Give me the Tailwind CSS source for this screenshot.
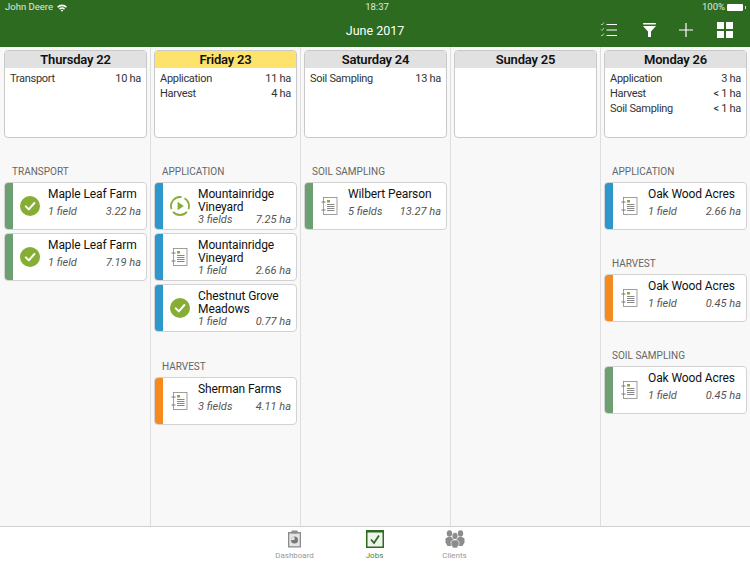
<!doctype html>
<html lang="en">
<head>
  <meta charset="utf-8">
  <title>Jobs</title>
  <script src="https://cdn.jsdelivr.net/npm/@tailwindcss/browser@4"></script>
</head>
<body class="w-[750px] h-[563px] overflow-hidden flex flex-col bg-white text-[#222] font-['Roboto','Liberation_Sans',sans-serif]">
  <svg class="hidden">
    <symbol id="done" viewBox="0 0 20 20">
      <circle cx="10" cy="10" r="10" fill="#86ae35"/>
      <path d="M5.800 10.400l3 3 5.600-6.400" fill="none" stroke="#fff" stroke-width="2" stroke-linecap="round" stroke-linejoin="round"/>
    </symbol>
    <symbol id="play" viewBox="0 0 20 20">
      <path d="M14.500 2.200A9 9 0 0 1 18.460 13.080M16.900 15.800A9 9 0 0 1 3.100 15.800M1.540 13.080A9 9 0 0 1 11.560 1.140" fill="none" stroke="#86ae35" stroke-width="1.800"/>
      <path d="M7.600 5.800l6.200 4.200-6.200 4.200z" fill="#86ae35"/>
    </symbol>
    <symbol id="plan" viewBox="0 0 20 20">
      <rect x="3.500" y="1.500" width="13.500" height="17" fill="#fff" stroke="#888" stroke-width="0.800"/>
      <path d="M1.500 6h4M1.500 14h4" stroke="#777" stroke-width="1"/>
      <rect x="7" y="4" width="3" height="2.500" fill="#86ae35"/>
      <path d="M7 8.500h7.500M7 10.500h7.500M7 12.500h7.500M7 14.500h7.500" stroke="#888" stroke-width="1"/>
    </symbol>
  </svg>

  <header class="h-[47px] shrink-0 bg-[#2d6b21] text-white relative">
    <div class="h-[15px] pl-[5px] pr-[4px] flex items-center justify-between text-[9.500px] text-white/85">
      <div class="flex items-center gap-[4px]">
        <span>John Deere</span>
        <svg class="w-[10px] h-[8px]" viewBox="0 0 10 8"><path d="M0 2.700a7 7 0 0 1 10 0L8.900 3.800a5.500 5.500 0 0 0-7.800 0zM2 4.600a4.300 4.300 0 0 1 6 0L7 5.700a2.900 2.900 0 0 0-4 0zM3.800 6.400a1.700 1.700 0 0 1 2.400 0L5 7.800z" fill="#fff"/></svg>
      </div>
      <span class="absolute left-[4px] right-0 text-center">18:37</span>
      <div class="flex items-center gap-[2px]">
        <span>100%</span>
        <span class="w-[16px] h-[7px] bg-white rounded-[1px]"></span>
        <span class="w-px h-[3px] bg-white/80"></span>
      </div>
    </div>
    <div class="h-[32px] flex items-center justify-center text-[12.500px] pt-[1px]">June 2017</div>
    <div class="absolute top-[21px] left-[600px] flex items-center">
      <svg class="w-[18px] h-[18px]" viewBox="0 0 18 18" fill="none" stroke="#fff">
        <path d="M6.500 3.500H17M6.500 9H17M6.500 14.500H17" stroke-width="1.200"/>
        <path d="M1 3l1 1 2-2.500M1 8.500l1 1 2-2.500M1 14l1 1 2-2.500" stroke-width="0.800" stroke-opacity="0.800"/>
      </svg>
      <svg class="w-[13px] h-[14px] ml-[25px]" viewBox="0 0 13 14" fill="#fff">
        <rect x="0" y="0" width="13" height="1.500" rx="0.700"/>
        <path d="M0 3h13L8 8.500V14H5V8.500z"/>
      </svg>
      <svg class="w-[14px] h-[14px] ml-[23px]" viewBox="0 0 14 14" stroke="#fff" stroke-width="1.200"><path d="M7 0v14M0 7h14"/></svg>
      <svg class="w-[16px] h-[16px] ml-[24px]" viewBox="0 0 16 16" fill="#fff">
        <rect width="7" height="7"/><rect x="9" width="7" height="7"/><rect y="9" width="7" height="7"/><rect x="9" y="9" width="7" height="7"/>
      </svg>
    </div>
  </header>

  <main class="flex-1 grid grid-cols-[151px_150px_150px_150px_149px] bg-[#f8f8f8]">

    <section class="pl-[4px] pr-[3px] pt-[3px] border-r border-[#dedede]">
      <div class="h-[88px] bg-white border border-[#c9c9c9] rounded-[4px] overflow-hidden">
        <h2 class="h-[17px] bg-[#e1e1e1] text-center text-[13px] tracking-[-0.2px] leading-[17px] font-semibold text-[#111]">Thursday 22</h2>
        <div class="px-[5px] pt-[3px] text-[11px] tracking-[-0.3px] leading-[15px] text-[#333]">
          <div class="flex justify-between"><span>Transport</span><span>10 ha</span></div>
        </div>
      </div>
      <h3 class="mt-[28px] mb-[4px] px-[8px] text-[10px] leading-[12px] text-[#666]">TRANSPORT</h3>
      <div class="flex flex-col gap-[3px]">
        <article class="h-[48px] flex bg-white border border-[#d2d2d2] rounded-[4px] overflow-hidden">
          <span class="w-[8px] shrink-0 bg-[#6e9f72]"></span>
          <svg class="w-[20px] h-[20px] ml-[7px] mr-[8px] self-center shrink-0"><use href="#done"/></svg>
          <div class="flex-1 pt-[5px] pr-[5px]">
            <p class="text-[12px] tracking-[-0.1px] leading-[13px] text-[#111]">Maple Leaf Farm</p>
            <p class="flex justify-between mt-[4px] text-[11px] leading-[13px] italic text-[#555]"><span>1 field</span><span>3.22 ha</span></p>
          </div>
        </article>
        <article class="h-[48px] flex bg-white border border-[#d2d2d2] rounded-[4px] overflow-hidden">
          <span class="w-[8px] shrink-0 bg-[#6e9f72]"></span>
          <svg class="w-[20px] h-[20px] ml-[7px] mr-[8px] self-center shrink-0"><use href="#done"/></svg>
          <div class="flex-1 pt-[5px] pr-[5px]">
            <p class="text-[12px] tracking-[-0.1px] leading-[13px] text-[#111]">Maple Leaf Farm</p>
            <p class="flex justify-between mt-[4px] text-[11px] leading-[13px] italic text-[#555]"><span>1 field</span><span>7.19 ha</span></p>
          </div>
        </article>
      </div>
    </section>

    <section class="px-[3px] pt-[3px] border-r border-[#dedede]">
      <div class="h-[88px] bg-white border border-[#c9c9c9] rounded-[4px] overflow-hidden">
        <h2 class="h-[17px] bg-[#fde36b] text-center text-[13px] tracking-[-0.2px] leading-[17px] font-semibold text-[#111]">Friday 23</h2>
        <div class="px-[5px] pt-[3px] text-[11px] tracking-[-0.3px] leading-[15px] text-[#333]">
          <div class="flex justify-between"><span>Application</span><span>11 ha</span></div>
          <div class="flex justify-between"><span>Harvest</span><span>4 ha</span></div>
        </div>
      </div>
      <h3 class="mt-[28px] mb-[4px] px-[8px] text-[10px] leading-[12px] text-[#666]">APPLICATION</h3>
      <div class="flex flex-col gap-[3px]">
        <article class="h-[48px] flex bg-white border border-[#d2d2d2] rounded-[4px] overflow-hidden">
          <span class="w-[8px] shrink-0 bg-[#2e97cc]"></span>
          <svg class="w-[20px] h-[20px] ml-[7px] mr-[8px] self-center shrink-0"><use href="#play"/></svg>
          <div class="flex-1 pt-[5px] pr-[5px]">
            <p class="text-[12px] tracking-[-0.1px] leading-[13px] text-[#111]">Mountainridge Vineyard</p>
            <p class="flex justify-between text-[11px] leading-[12px] italic text-[#555]"><span>3 fields</span><span>7.25 ha</span></p>
          </div>
        </article>
        <article class="h-[48px] flex bg-white border border-[#d2d2d2] rounded-[4px] overflow-hidden">
          <span class="w-[8px] shrink-0 bg-[#2e97cc]"></span>
          <svg class="w-[20px] h-[20px] ml-[7px] mr-[8px] self-center shrink-0"><use href="#plan"/></svg>
          <div class="flex-1 pt-[5px] pr-[5px]">
            <p class="text-[12px] tracking-[-0.1px] leading-[13px] text-[#111]">Mountainridge Vineyard</p>
            <p class="flex justify-between text-[11px] leading-[12px] italic text-[#555]"><span>1 field</span><span>2.66 ha</span></p>
          </div>
        </article>
        <article class="h-[48px] flex bg-white border border-[#d2d2d2] rounded-[4px] overflow-hidden">
          <span class="w-[8px] shrink-0 bg-[#2e97cc]"></span>
          <svg class="w-[20px] h-[20px] ml-[7px] mr-[8px] self-center shrink-0"><use href="#done"/></svg>
          <div class="flex-1 pt-[5px] pr-[5px]">
            <p class="text-[12px] tracking-[-0.1px] leading-[13px] text-[#111]">Chestnut Grove Meadows</p>
            <p class="flex justify-between text-[11px] leading-[12px] italic text-[#555]"><span>1 field</span><span>0.77 ha</span></p>
          </div>
        </article>
      </div>
      <h3 class="mt-[29px] mb-[4px] px-[8px] text-[10px] leading-[12px] text-[#666]">HARVEST</h3>
      <article class="h-[48px] flex bg-white border border-[#d2d2d2] rounded-[4px] overflow-hidden">
        <span class="w-[8px] shrink-0 bg-[#f58a1f]"></span>
        <svg class="w-[20px] h-[20px] ml-[7px] mr-[8px] self-center shrink-0"><use href="#plan"/></svg>
        <div class="flex-1 pt-[5px] pr-[5px]">
          <p class="text-[12px] tracking-[-0.1px] leading-[13px] text-[#111]">Sherman Farms</p>
          <p class="flex justify-between mt-[4px] text-[11px] leading-[13px] italic text-[#555]"><span>3 fields</span><span>4.11 ha</span></p>
        </div>
      </article>
    </section>

    <section class="px-[3px] pt-[3px] border-r border-[#dedede]">
      <div class="h-[88px] bg-white border border-[#c9c9c9] rounded-[4px] overflow-hidden">
        <h2 class="h-[17px] bg-[#e1e1e1] text-center text-[13px] tracking-[-0.2px] leading-[17px] font-semibold text-[#111]">Saturday 24</h2>
        <div class="px-[5px] pt-[3px] text-[11px] tracking-[-0.3px] leading-[15px] text-[#333]">
          <div class="flex justify-between"><span>Soil Sampling</span><span>13 ha</span></div>
        </div>
      </div>
      <h3 class="mt-[28px] mb-[4px] px-[8px] text-[10px] leading-[12px] text-[#666]">SOIL SAMPLING</h3>
      <article class="h-[48px] flex bg-white border border-[#d2d2d2] rounded-[4px] overflow-hidden">
        <span class="w-[8px] shrink-0 bg-[#6e9f72]"></span>
        <svg class="w-[20px] h-[20px] ml-[7px] mr-[8px] self-center shrink-0"><use href="#plan"/></svg>
        <div class="flex-1 pt-[5px] pr-[5px]">
          <p class="text-[12px] tracking-[-0.1px] leading-[13px] text-[#111]">Wilbert Pearson</p>
          <p class="flex justify-between mt-[4px] text-[11px] leading-[13px] italic text-[#555]"><span>5 fields</span><span>13.27 ha</span></p>
        </div>
      </article>
    </section>

    <section class="px-[3px] pt-[3px] border-r border-[#dedede]">
      <div class="h-[88px] bg-white border border-[#c9c9c9] rounded-[4px] overflow-hidden">
        <h2 class="h-[17px] bg-[#e1e1e1] text-center text-[13px] tracking-[-0.2px] leading-[17px] font-semibold text-[#111]">Sunday 25</h2>
      </div>
    </section>

    <section class="px-[3px] pt-[3px]">
      <div class="h-[88px] bg-white border border-[#c9c9c9] rounded-[4px] overflow-hidden">
        <h2 class="h-[17px] bg-[#e1e1e1] text-center text-[13px] tracking-[-0.2px] leading-[17px] font-semibold text-[#111]">Monday 26</h2>
        <div class="px-[5px] pt-[3px] text-[11px] tracking-[-0.3px] leading-[15px] text-[#333]">
          <div class="flex justify-between"><span>Application</span><span>3 ha</span></div>
          <div class="flex justify-between"><span>Harvest</span><span>&lt; 1 ha</span></div>
          <div class="flex justify-between"><span>Soil Sampling</span><span>&lt; 1 ha</span></div>
        </div>
      </div>
      <h3 class="mt-[28px] mb-[4px] px-[8px] text-[10px] leading-[12px] text-[#666]">APPLICATION</h3>
      <article class="h-[48px] flex bg-white border border-[#d2d2d2] rounded-[4px] overflow-hidden">
        <span class="w-[8px] shrink-0 bg-[#2e97cc]"></span>
        <svg class="w-[20px] h-[20px] ml-[7px] mr-[8px] self-center shrink-0"><use href="#plan"/></svg>
        <div class="flex-1 pt-[5px] pr-[5px]">
          <p class="text-[12px] tracking-[-0.1px] leading-[13px] text-[#111]">Oak Wood Acres</p>
          <p class="flex justify-between mt-[4px] text-[11px] leading-[13px] italic text-[#555]"><span>1 field</span><span>2.66 ha</span></p>
        </div>
      </article>
      <h3 class="mt-[28px] mb-[4px] px-[8px] text-[10px] leading-[12px] text-[#666]">HARVEST</h3>
      <article class="h-[48px] flex bg-white border border-[#d2d2d2] rounded-[4px] overflow-hidden">
        <span class="w-[8px] shrink-0 bg-[#f58a1f]"></span>
        <svg class="w-[20px] h-[20px] ml-[7px] mr-[8px] self-center shrink-0"><use href="#plan"/></svg>
        <div class="flex-1 pt-[5px] pr-[5px]">
          <p class="text-[12px] tracking-[-0.1px] leading-[13px] text-[#111]">Oak Wood Acres</p>
          <p class="flex justify-between mt-[4px] text-[11px] leading-[13px] italic text-[#555]"><span>1 field</span><span>0.45 ha</span></p>
        </div>
      </article>
      <h3 class="mt-[28px] mb-[4px] px-[8px] text-[10px] leading-[12px] text-[#666]">SOIL SAMPLING</h3>
      <article class="h-[48px] flex bg-white border border-[#d2d2d2] rounded-[4px] overflow-hidden">
        <span class="w-[8px] shrink-0 bg-[#6e9f72]"></span>
        <svg class="w-[20px] h-[20px] ml-[7px] mr-[8px] self-center shrink-0"><use href="#plan"/></svg>
        <div class="flex-1 pt-[5px] pr-[5px]">
          <p class="text-[12px] tracking-[-0.1px] leading-[13px] text-[#111]">Oak Wood Acres</p>
          <p class="flex justify-between mt-[4px] text-[11px] leading-[13px] italic text-[#555]"><span>1 field</span><span>0.45 ha</span></p>
        </div>
      </article>
    </section>
  </main>

  <!-- tab bar -->
  <nav class="h-[37px] shrink-0 border-t border-[#cfcfcf] bg-white flex justify-center gap-[50px] text-[8px] text-[#999]">
    <div class="w-[30px] -ml-[1px] flex flex-col items-center pt-[3px]">
      <svg class="w-[15px] h-[18px]" viewBox="0 0 15 18">
        <rect x="1" y="2" width="13" height="15.500" fill="#8c8c8c"/>
        <rect x="2.300" y="3.500" width="10.400" height="12.700" fill="#e4e4e4"/>
        <rect x="4.500" y="0.500" width="6" height="3" fill="#8c8c8c"/>
        <circle cx="7.500" cy="10" r="3.500" fill="#777"/>
        <path d="M7.500 10V6.500A3.500 3.500 0 0 0 4 10z" fill="#e4e4e4"/>
      </svg>
      <span class="mt-[3px] leading-[10px]">Dashboard</span>
    </div>
    <div class="w-[30px] flex flex-col items-center pt-[3px] text-[#4f8142]">
      <svg class="w-[18px] h-[18px]" viewBox="0 0 18 18">
        <rect x="0.750" y="0.750" width="16.500" height="16.500" fill="#eef4ec" stroke="#2d6b21" stroke-width="1.500"/>
        <rect x="0" y="0" width="18" height="2.500" fill="#2d6b21"/>
        <path d="M5 9.500l3 3.500 5-7.500" fill="none" stroke="#2d6b21" stroke-width="1.800"/>
      </svg>
      <span class="mt-[3px] leading-[10px]">Jobs</span>
    </div>
    <div class="w-[30px] flex flex-col items-center pt-[3px]">
      <svg class="w-[20px] h-[18px]" viewBox="0 0 20 18" fill="#8c8c8c">
        <ellipse cx="4.500" cy="3.500" rx="2.700" ry="3.200"/><path d="M0.500 8.500l2.500-1.500h3l2.500 1.500v4l-2 3.500h-4l-2-3.500z"/>
        <ellipse cx="15.500" cy="3.500" rx="2.700" ry="3.200"/><path d="M11.500 8.500l2.500-1.500h3l2.500 1.500v4l-2 3.500h-4l-2-3.500z"/>
        <ellipse cx="10" cy="6" rx="3" ry="3.600" stroke="#fff" stroke-width="0.600"/><path d="M6 11.500l2.500-1.500h3l2.500 1.500v3l-2 3.500H8l-2-3.500z" stroke="#fff" stroke-width="0.600"/>
      </svg>
      <span class="mt-[3px] leading-[10px]">Clients</span>
    </div>
  </nav>
</body>
</html>
